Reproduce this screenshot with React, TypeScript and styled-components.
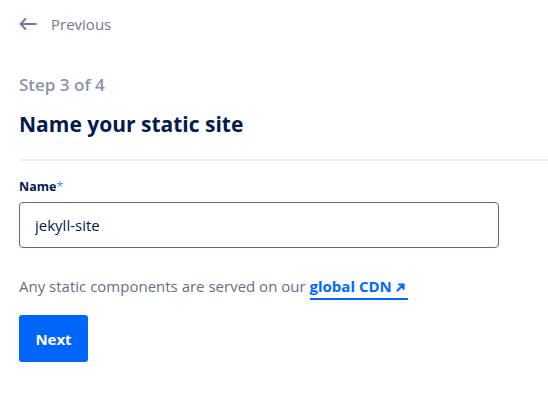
import React from "react";
import styled, { createGlobalStyle } from "styled-components";

const Global = createGlobalStyle`
  html, body { margin: 0; padding: 0; background: #fff; }
  body { font-family: "Open Sans", "Liberation Sans", Arial, sans-serif; -webkit-font-smoothing: antialiased; }
  * { box-sizing: border-box; }
`;

const Page = styled.div`
  width: 548px;
  height: 394px;
  padding: 15px 0 0 19px;
  overflow: hidden;
`;

const BackLink = styled.a`
  display: flex;
  align-items: center;
  gap: 14px;
  color: #6f7a94;
  font-size: 15px;
  text-decoration: none;
  height: 18px;
`;

const Step = styled.div`
  margin-top: 41px;
  color: #8a94ab;
  font-size: 17px;
  font-weight: 600;
  line-height: 21px;
`;

const Heading = styled.h2`
  margin: 15px 0 0;
  color: #031b4e;
  font-size: 21px;
  font-weight: 700;
  line-height: 28px;
`;

const Divider = styled.hr`
  margin: 21px 0 0;
  border: 0;
  height: 2px;
  background: #f1f1f1;
`;

const Label = styled.label`
  display: block;
  margin-top: 18px;
  color: #031b4e;
  font-size: 12.5px;
  font-weight: 700;
  line-height: 16px;
`;

const Req = styled.span`
  color: #4d8eff;
  font-weight: 400;
`;

const Input = styled.input`
  display: block;
  margin-top: 7px;
  width: 480px;
  height: 46px;
  border: 1px solid #5b6987;
  border-radius: 4px;
  padding: 0 15px;
  font-family: inherit;
  font-size: 15px;
  color: #031b4e;
  outline: none;
`;

const Help = styled.p`
  margin: 27px 0 0;
  color: #676f85;
  font-size: 15px;
  line-height: 22px;
`;

const Ext = styled.a`
  color: #0069ff;
  font-weight: 700;
  text-decoration: none;
  border-bottom: 2px solid #0069ff;
  padding: 0 3px 2px 0;
`;

const Button = styled.button`
  display: block;
  margin-top: 18px;
  width: 69px;
  height: 47px;
  border: 0;
  border-radius: 3px;
  background: #0066fa;
  color: #fff;
  font-family: inherit;
  font-size: 15px;
  font-weight: 700;
`;

export default function App() {
  return (
    <>
      <Global />
      <Page>
        <BackLink href="#">
          <svg width="18" height="12" viewBox="0 0 18 12" fill="none" stroke="#6f7a94" strokeWidth="1.8" strokeLinecap="round" strokeLinejoin="round">
            <path d="M17 6H1.5M6.5 1L1.5 6l5 5" />
          </svg>
          Previous
        </BackLink>
        <Step>Step 3 of 4</Step>
        <Heading>Name your static site</Heading>
        <Divider />
        <Label>Name<Req>*</Req></Label>
        <Input defaultValue="jekyll-site" />
        <Help>
          Any static components are served on our{" "}
          <Ext href="#">
            global CDN{" "}
            <svg width="9" height="9" viewBox="0 0 9 9" fill="none" stroke="#0069ff" strokeWidth="2.2" strokeLinecap="round">
              <path d="M1.5 7.5L7 2M3 1.5h4.5V6" />
            </svg>
          </Ext>
        </Help>
        <Button>Next</Button>
      </Page>
    </>
  );
}
